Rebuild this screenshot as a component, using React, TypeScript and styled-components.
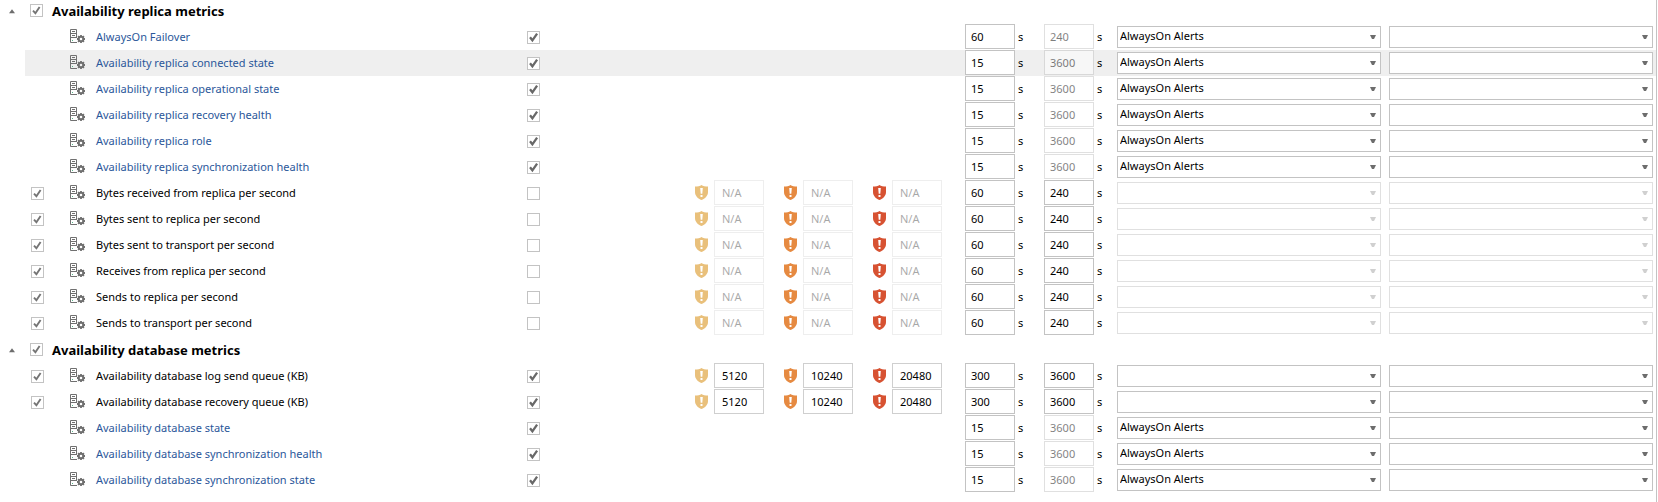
import React, { useState } from 'react';
import styled, { createGlobalStyle, css } from 'styled-components';

const GlobalStyle = createGlobalStyle`
  *, *::before, *::after { box-sizing: border-box; }
  body {
    margin: 0;
    background: #fff;
    color: #000;
    font-family: "Noto Sans", "Open Sans", sans-serif;
    font-size: 11px;
    line-height: 16px;
  }
`;

/* ---------- data ---------- */

type Metric = {
  name: string;
  /** Event metrics are always collected and have no thresholds. */
  event?: boolean;
  alert: boolean;
  thresholds?: [string, string, string];
  interval: string;
  retention: string;
  action: string;
  selected?: boolean;
};

type Group = { title: string; metrics: Metric[] };

const ALERTS = 'AlwaysOn Alerts';
const NOT_SET: [string, string, string] = ['N/A', 'N/A', 'N/A'];

const eventMetric = (name: string, interval = '15', retention = '3600', selected = false): Metric => ({
  name, event: true, alert: true, interval, retention, action: ALERTS, selected,
});

const counterMetric = (name: string): Metric => ({
  name, alert: false, thresholds: NOT_SET, interval: '60', retention: '240', action: '',
});

const queueMetric = (name: string): Metric => ({
  name, alert: true, thresholds: ['5120', '10240', '20480'], interval: '300', retention: '3600', action: '',
});

const groups: Group[] = [
  {
    title: 'Availability replica metrics',
    metrics: [
      eventMetric('AlwaysOn Failover', '60', '240'),
      eventMetric('Availability replica connected state', '15', '3600', true),
      eventMetric('Availability replica operational state'),
      eventMetric('Availability replica recovery health'),
      eventMetric('Availability replica role'),
      eventMetric('Availability replica synchronization health'),
      counterMetric('Bytes received from replica per second'),
      counterMetric('Bytes sent to replica per second'),
      counterMetric('Bytes sent to transport per second'),
      counterMetric('Receives from replica per second'),
      counterMetric('Sends to replica per second'),
      counterMetric('Sends to transport per second'),
    ],
  },
  {
    title: 'Availability database metrics',
    metrics: [
      queueMetric('Availability database log send queue (KB)'),
      queueMetric('Availability database recovery queue (KB)'),
      eventMetric('Availability database state'),
      eventMetric('Availability database synchronization health'),
      eventMetric('Availability database synchronization state'),
    ],
  },
];

const levels = [
  { label: 'Low', color: '#e9c07b' },
  { label: 'Medium', color: '#e68a41' },
  { label: 'High', color: '#d75232' },
];

/* ---------- layout ---------- */

const Panel = styled.main`
  min-height: 100vh;
  overflow: hidden;
  margin-right: 1px;
  border-right: 1px solid #c3c3c3;
`;

const MetricsTable = styled.table`
  width: 100%;
  min-width: 1400px;
  table-layout: fixed;
  border-collapse: collapse;
`;

const Col = styled.col<{ $width?: number }>`
  ${({ $width }) => $width && css`width: ${$width}px;`}
`;

const GroupRow = styled.tr<{ $first: boolean }>`
  height: ${({ $first }) => ($first ? 24 : 27)}px;
`;

const GroupExpander = styled.td<{ $first: boolean }>`
  padding: ${({ $first }) => ($first ? 0 : 3)}px 0 0 8px;
  vertical-align: top;
`;

const GroupHead = styled.th<{ $first: boolean }>`
  padding: ${({ $first }) => ($first ? 0 : 3)}px 0 0 5px;
  text-align: left;
  vertical-align: top;
`;

const GroupLabel = styled.label`
  display: inline-flex;
  align-items: center;
  gap: 9px;
  height: 21px;
  font-size: 13px;
  font-weight: 700;
`;

const ExpandButton = styled.button`
  display: flex;
  align-items: center;
  justify-content: center;
  width: 8px;
  height: 22px;
  padding: 0;
  border: 0;
  background: none;
`;

const Cell = styled.td`
  padding: 0;
  vertical-align: top;
`;

const MetricRow = styled.tr<{ $selected?: boolean }>`
  height: 26px;
  ${({ $selected }) => $selected && css`
    ${Cell} + ${Cell} { background: #efefef; }
  `}
`;

const CheckCell = styled(Cell)`
  padding: 7px 0 0 6px;
`;

const IconCell = styled(Cell)`
  padding: 5px 0 0 5px;
`;

const NameCell = styled(Cell)`
  padding-top: 5px;
  white-space: nowrap;
`;

const MetricName = styled.span`
  display: block;
`;

const MetricLink = styled.a`
  color: #2b579a;
  text-decoration: none;
`;

const ThresholdField = styled.label`
  display: flex;
  align-items: center;
  gap: 6px;
`;

const IntervalField = styled.label`
  display: flex;
  gap: 3px;
`;

const Unit = styled.span`
  padding-top: 5px;
`;

/* ---------- controls ---------- */

const CheckFrame = styled.span`
  position: relative;
  display: block;
  width: 13px;
  height: 13px;
`;

const CheckInput = styled.input`
  appearance: none;
  display: block;
  width: 13px;
  height: 13px;
  margin: 0;
  border: 1px solid #c3c3c3;
  background: #fff;
`;

const CheckMark = styled.svg`
  position: absolute;
  inset: 0;
  pointer-events: none;
`;

const NumberBox = styled.input`
  display: block;
  width: 50px;
  height: 25px;
  padding: 0 5px 1px;
  border: 1px solid #c3c3c3;
  border-radius: 0;
  background: #fff;
  color: #000;
  font: inherit;
  &:disabled { opacity: 0.5; }
`;

const ThresholdBox = styled(NumberBox)`
  padding: 0 7px 1px;
  border-color: #cfcfcf;
  &:disabled { opacity: 0.34; }
`;

const SelectCell = styled(Cell)<{ $last?: boolean }>`
  padding: 2px ${({ $last }) => ($last ? 3 : 5)}px 0 ${({ $last }) => ($last ? 3 : 1)}px;
`;

const SelectFrame = styled.div`
  position: relative;
`;

const SelectBox = styled.select`
  appearance: none;
  display: block;
  width: 100%;
  height: 22px;
  padding: 0 16px 2px 2px;
  border: 1px solid #c3c3c3;
  border-radius: 0;
  background: #fff;
  color: #000;
  font: inherit;
  &:disabled { opacity: 0.5; }
`;

const SelectArrow = styled.svg<{ $dim?: boolean }>`
  position: absolute;
  top: 9px;
  right: 5px;
  pointer-events: none;
  fill: ${({ $dim }) => ($dim ? '#d0d0d0' : '#6d6d6d')};
`;

/* ---------- icons ---------- */

const CollapseIcon = () => (
  <svg width="6" height="5" viewBox="0 0 6 5" aria-hidden="true">
    <path d="M3 .3 6 4.2H0Z" fill="#6d6d6d" />
  </svg>
);

const ServerGearIcon = () => (
  <svg width="16" height="15" viewBox="0 0 16 15" aria-hidden="true">
    <path
      d="M6.500 9V.5h-6v13H7M1 4.500h5M1 8.500h5M2 2.500h3M2 6.500h3"
      fill="none"
      stroke="#707070"
    />
    <path d="M2 11h1v1H2z" fill="#59b58b" />
    <circle cx="11" cy="10" r="2.300" fill="none" stroke="#707070" strokeWidth="2" />
    <path
      d="M11 7.500V6M11 12.500V14M8.500 10H7M13.500 10H15M9.100 8.100 8.100 7.100M12.900 8.100l1-1M9.100 11.900l-1 1M12.900 11.900l1 1"
      stroke="#707070"
      strokeWidth="1.800"
      fill="none"
    />
  </svg>
);

const ShieldIcon = ({ color }: { color: string }) => (
  <svg width="13" height="15" viewBox="0 0 13 15" aria-hidden="true">
    <path d="M6.500 0C5 1 2.600 1.500 0 1.500V7c0 3.800 3 6.700 6.500 8C10 13.700 13 10.800 13 7V1.500C10.400 1.500 8 1 6.500 0Z" fill={color} />
    <path d="M5.200 3h2.600l-.5 5.800H5.700Z" fill="#fff" />
    <path d="M5.500 10h2v2h-2z" fill="#fff" />
  </svg>
);

/* ---------- parts ---------- */

type CheckBoxProps = { initial: boolean; label?: string; light?: boolean };

function CheckBox({ initial, label, light }: CheckBoxProps) {
  const [checked, setChecked] = useState(initial);
  return (
    <CheckFrame>
      <CheckInput
        type="checkbox"
        aria-label={label}
        checked={checked}
        onChange={(e) => setChecked(e.target.checked)}
      />
      {checked && (
        <CheckMark width="13" height="13" viewBox="0 0 13 13" aria-hidden="true">
          {light ? (
            <path d="M3 6.600 5.400 9.200 9.600 3" fill="none" stroke="#757575" strokeWidth="1.900" />
          ) : (
            <path d="M3 6.300 5.400 9.300 10.100 2.600" fill="none" stroke="#686868" strokeWidth="2.300" />
          )}
        </CheckMark>
      )}
    </CheckFrame>
  );
}

type DropDownProps = { label: string; value: string; disabled?: boolean };

function DropDown({ label, value, disabled }: DropDownProps) {
  return (
    <SelectFrame>
      <SelectBox aria-label={label} defaultValue={value} disabled={disabled}>
        <option value="" />
        <option value={ALERTS}>{ALERTS}</option>
      </SelectBox>
      <SelectArrow $dim={disabled} width="6" height="4" viewBox="0 0 6 4" aria-hidden="true">
        <path d="M0 0h6L4 4H2Z" />
      </SelectArrow>
    </SelectFrame>
  );
}

function MetricLine({ metric }: { metric: Metric }) {
  const { name, event, alert, thresholds, interval, retention, action, selected } = metric;
  return (
    <MetricRow $selected={selected}>
      <Cell />
      <CheckCell>{!event && <CheckBox initial light label={`Collect ${name}`} />}</CheckCell>
      <IconCell><ServerGearIcon /></IconCell>
      <NameCell>
        <MetricName>{event ? <MetricLink href="#">{name}</MetricLink> : name}</MetricName>
      </NameCell>
      <CheckCell><CheckBox initial={alert} label={`Alert on ${name}`} /></CheckCell>
      {levels.map((level, i) => (
        <Cell key={level.label}>
          {thresholds && (
            <ThresholdField>
              <ShieldIcon color={level.color} />
              <ThresholdBox
                aria-label={`${level.label} threshold`}
                defaultValue={thresholds[i]}
                disabled={!alert}
              />
            </ThresholdField>
          )}
        </Cell>
      ))}
      <Cell>
        <IntervalField>
          <NumberBox aria-label="Interval" defaultValue={interval} />
          <Unit>s</Unit>
        </IntervalField>
      </Cell>
      <Cell>
        <IntervalField>
          <NumberBox aria-label="Retention" defaultValue={retention} disabled={event} />
          <Unit>s</Unit>
        </IntervalField>
      </Cell>
      <SelectCell><DropDown label="Alert action" value={action} disabled={!alert} /></SelectCell>
      <SelectCell $last><DropDown label="Second action" value="" disabled={!alert} /></SelectCell>
    </MetricRow>
  );
}

function MetricGroup({ group, first }: { group: Group; first: boolean }) {
  const [open, setOpen] = useState(true);
  return (
    <tbody>
      <GroupRow $first={first}>
        <GroupExpander $first={first}>
          <ExpandButton aria-label={`Toggle ${group.title}`} aria-expanded={open} onClick={() => setOpen(!open)}>
            <CollapseIcon />
          </ExpandButton>
        </GroupExpander>
        <GroupHead $first={first} colSpan={11} scope="rowgroup">
          <GroupLabel>
            <CheckBox initial light />
            {group.title}
          </GroupLabel>
        </GroupHead>
      </GroupRow>
      {open && group.metrics.map((metric) => <MetricLine key={metric.name} metric={metric} />)}
    </tbody>
  );
}

const columnWidths = [25, 40, 31, 425, 174, 89, 89, 92, 79, 72];

export default function App() {
  return (
    <>
      <GlobalStyle />
      <Panel>
        <MetricsTable>
          <colgroup>
            {columnWidths.map((width, i) => <Col key={i} $width={width} />)}
            <Col />
            <Col />
          </colgroup>
          {groups.map((group, i) => (
            <MetricGroup key={group.title} group={group} first={i === 0} />
          ))}
        </MetricsTable>
      </Panel>
    </>
  );
}
